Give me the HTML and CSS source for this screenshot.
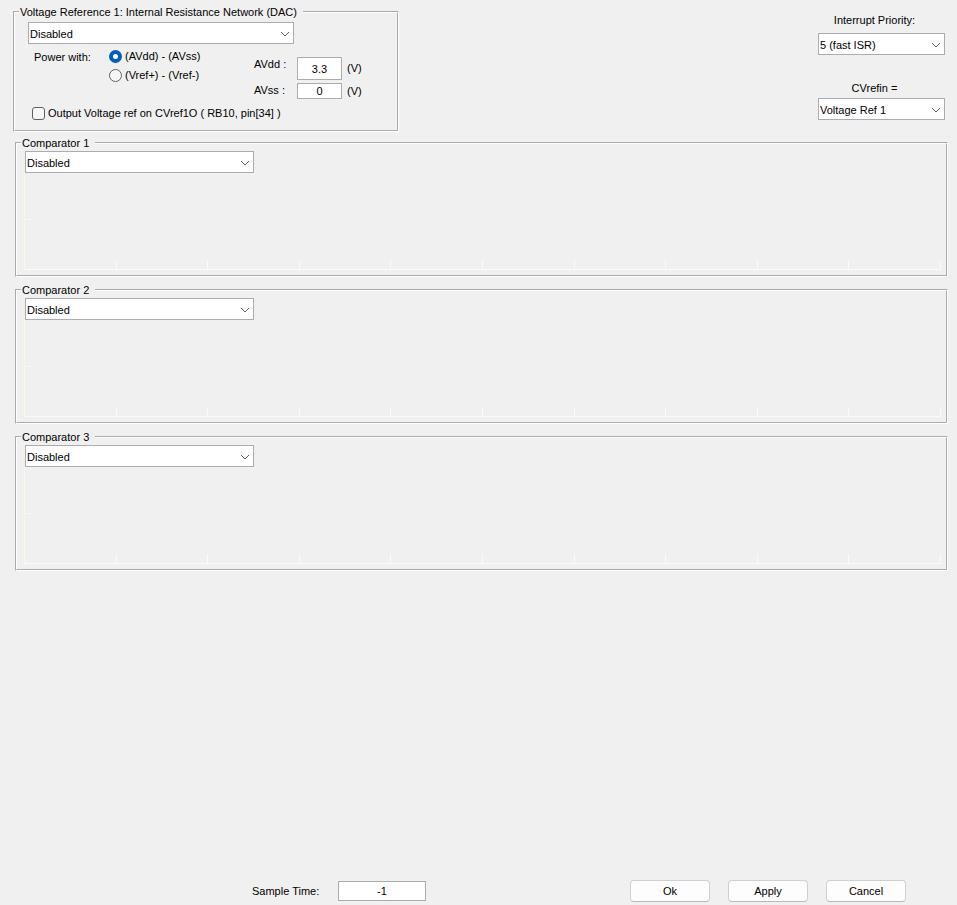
FILE: index.html
```html
<!DOCTYPE html>
<html lang="en">
<head>
    <meta charset="UTF-8">
    <meta name="viewport" content="width=device-width, initial-scale=1.0">
    <title>Comparator</title>
    <link rel="stylesheet" href="styles.css">
</head>
<body>
    <form class="dialog">
        <div class="top">
            <fieldset class="group reference">
                <legend>Voltage Reference 1: Internal Resistance Network (DAC)</legend>
                <div class="reference-body">
                    <div class="combo combo-reference">
                        <select aria-label="Voltage Reference 1">
                            <option>Disabled</option>
                        </select>
                        <svg viewBox="0 0 10 6"><path d="M1 1l4 4 4-4"/></svg>
                    </div>
                    <div class="power">
                        <span>Power with:</span>
                        <div class="sources">
                            <label><input type="radio" name="power" checked>(AVdd) - (AVss)</label>
                            <label><input type="radio" name="power">(Vref+) - (Vref-)</label>
                        </div>
                        <div class="supply">
                            <label for="avdd">AVdd :</label>
                            <input type="text" id="avdd" class="avdd" value="3.3">
                            <span>(V)</span>
                            <label for="avss">AVss :</label>
                            <input type="text" id="avss" value="0">
                            <span>(V)</span>
                        </div>
                    </div>
                    <label class="output"><input type="checkbox">Output Voltage ref on CVref1O ( RB10, pin[34] )</label>
                </div>
            </fieldset>
            <div class="settings">
                <label for="priority">Interrupt Priority:</label>
                <div class="combo">
                    <select id="priority">
                        <option>5 (fast ISR)</option>
                    </select>
                    <svg viewBox="0 0 10 6"><path d="M1 1l4 4 4-4"/></svg>
                </div>
                <label for="cvrefin">CVrefin =</label>
                <div class="combo">
                    <select id="cvrefin">
                        <option>Voltage Ref 1</option>
                    </select>
                    <svg viewBox="0 0 10 6"><path d="M1 1l4 4 4-4"/></svg>
                </div>
            </div>
        </div>

        <div class="comparators">
            <fieldset class="group">
                <legend>Comparator 1</legend>
                <div class="comparator-body">
                    <div class="combo">
                        <select aria-label="Comparator 1">
                            <option>Disabled</option>
                        </select>
                        <svg viewBox="0 0 10 6"><path d="M1 1l4 4 4-4"/></svg>
                    </div>
                    <!-- empty axes -->
                    <div class="plot"><i></i><i></i><i></i><i></i><i></i><i></i><i></i><i></i><i></i><i></i></div>
                </div>
            </fieldset>
            <fieldset class="group">
                <legend>Comparator 2</legend>
                <div class="comparator-body">
                    <div class="combo">
                        <select aria-label="Comparator 2">
                            <option>Disabled</option>
                        </select>
                        <svg viewBox="0 0 10 6"><path d="M1 1l4 4 4-4"/></svg>
                    </div>
                    <div class="plot"><i></i><i></i><i></i><i></i><i></i><i></i><i></i><i></i><i></i><i></i></div>
                </div>
            </fieldset>
            <fieldset class="group">
                <legend>Comparator 3</legend>
                <div class="comparator-body">
                    <div class="combo">
                        <select aria-label="Comparator 3">
                            <option>Disabled</option>
                        </select>
                        <svg viewBox="0 0 10 6"><path d="M1 1l4 4 4-4"/></svg>
                    </div>
                    <div class="plot"><i></i><i></i><i></i><i></i><i></i><i></i><i></i><i></i><i></i><i></i></div>
                </div>
            </fieldset>
        </div>

        <div class="footer">
            <label for="sample">Sample Time:</label>
            <input type="text" id="sample" value="-1">
            <div class="buttons">
                <button type="button">Ok</button>
                <button type="button">Apply</button>
                <button type="button">Cancel</button>
            </div>
        </div>
    </form>
</body>
</html>
```

FILE: styles.css
```css
* {
    box-sizing: border-box;
}
body {
    margin: 0;
    background-color: #f0f0f0;
    color: #000;
    font-family: "Liberation Sans", Arial, sans-serif;
    font-size: 11px;
    line-height: 13px;
}
input, select, button {
    font: inherit;
    color: inherit;
    margin: 0;
}
.dialog {
    display: flex;
    flex-direction: column;
    min-height: 100vh;
    padding: 6px 9px 3px 13px;
}
.top {
    display: flex;
    justify-content: space-between;
    align-items: flex-start;
    padding-right: 3px;
}

/* etched group box */
.group {
    margin: 0;
    padding: 0;
    min-width: 0;
    border: 2px groove #fff;
}
.group legend {
    margin-left: 4px;
    padding: 0 6px 0 1px;
    line-height: 12px;
}

/* combo box */
.combo {
    position: relative;
    height: 22px;
}
.combo select {
    display: block;
    appearance: none;
    width: 100%;
    height: 22px;
    padding: 2px 20px 0 1px;
    border: 1px solid #acacb0;
    border-radius: 0;
    background-color: #fff;
}
.combo svg {
    position: absolute;
    right: 4px;
    top: 9px;
    width: 10px;
    height: 6px;
    fill: none;
    stroke: #606060;
    pointer-events: none;
}
input[type="text"] {
    height: 16px;
    padding: 0;
    border: 1px solid #acacb0;
    background-color: #fff;
    text-align: center;
}

/* voltage reference */
.reference {
    width: 386px;
}
.reference-body {
    padding: 4px 13px 7px;
}
.combo-reference {
    width: 266px;
}
.power {
    display: flex;
    margin-top: 3px;
    padding-left: 6px;
}
.power > span {
    width: 75px;
    line-height: 21px;
}
.sources {
    width: 145px;
}
.sources label,
.output {
    display: flex;
    align-items: center;
    line-height: 19px;
}
input[type="radio"],
input[type="checkbox"] {
    appearance: none;
    width: 13px;
    height: 13px;
    border: 1px solid #606060;
    background-color: #f7f7f7;
}
input[type="radio"] {
    margin-right: 3px;
    border-radius: 50%;
}
input[type="radio"]:checked {
    border: 4px solid #005fb8;
    background-color: #fff;
}
input[type="checkbox"] {
    margin-right: 3px;
    border-radius: 3px;
}
.supply {
    display: grid;
    grid-template-columns: 43px 45px auto;
    row-gap: 3px;
    align-items: center;
    margin-top: 10px;
}
.supply label {
    align-self: start;
    padding-top: 1px;
}
.supply span {
    padding-left: 5px;
}
.supply .avdd {
    height: 23px;
}
.output {
    margin-top: 5px;
    padding-left: 4px;
}

/* interrupt priority and reference input */
.settings {
    display: flex;
    flex-direction: column;
    width: 127px;
    padding-top: 8px;
}
.settings label {
    padding-right: 14px;
    text-align: center;
}
.settings .combo {
    margin-top: 6px;
}
.settings .combo + label {
    margin-top: 27px;
}
.settings .combo:last-child {
    margin-top: 3px;
}

/* comparators */
.comparators {
    display: flex;
    flex-direction: column;
    gap: 7px;
    margin-top: 5px;
    padding-left: 2px;
}
.comparator-body {
    padding: 2px 5px 5px 7px;
}
.comparator-body .combo {
    width: 229px;
    margin-left: 1px;
}
.plot {
    position: relative;
    display: flex;
    align-items: flex-end;
    height: 97px;
    border-left: 1px solid #fdf5e6;
    border-bottom: 1px solid #fafafa;
}
.plot::before {
    content: "";
    position: absolute;
    left: 0;
    top: 46px;
    width: 9px;
    height: 1px;
    background-color: #fdf5e6;
}
.plot i {
    flex: 1;
    height: 9px;
    border-right: 1px solid #fafafa;
}

/* footer */
.footer {
    display: flex;
    align-items: center;
    margin-top: auto;
    padding-left: 239px;
    padding-right: 42px;
}
.footer label {
    width: 86px;
}
.footer input[type="text"] {
    width: 88px;
    height: 20px;
}
.buttons {
    display: flex;
    gap: 18px;
    margin-left: auto;
}
.buttons button {
    width: 80px;
    height: 22px;
    padding: 0;
    border: 1px solid #d0d0d0;
    border-bottom-color: #bababa;
    border-radius: 4px;
    background-color: #fdfdfd;
}
```
